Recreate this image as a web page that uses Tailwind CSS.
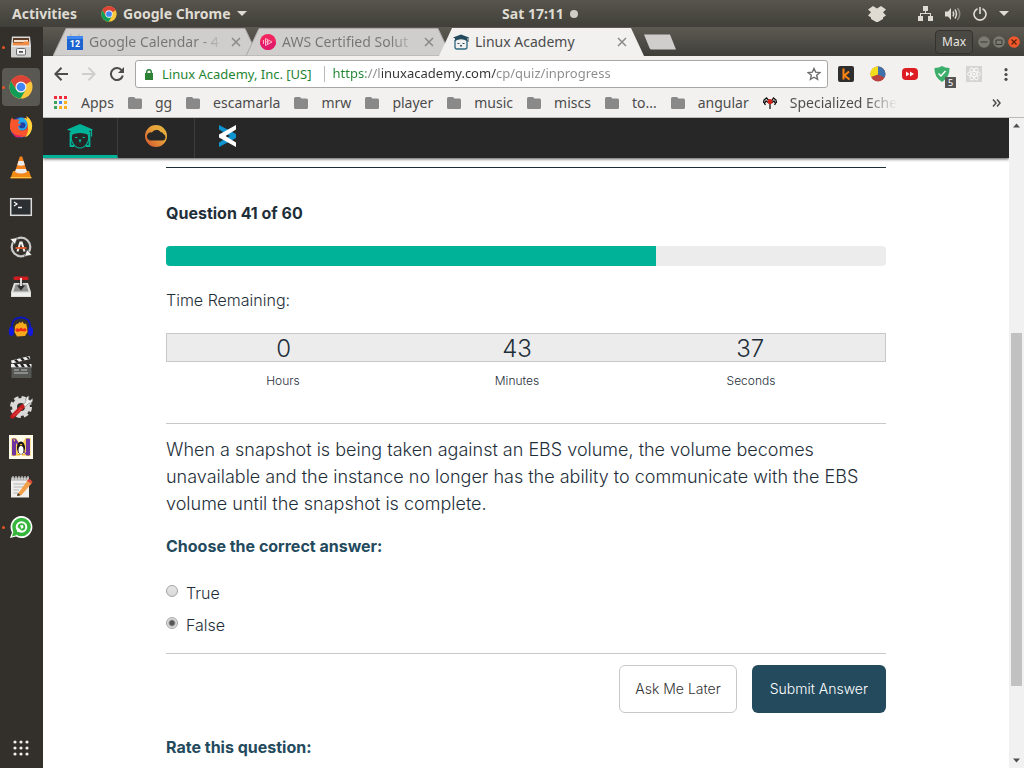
<!DOCTYPE html>
<html lang="en">
<head>
<meta charset="utf-8">
<meta name="viewport" content="width=device-width, initial-scale=1">
<title>Linux Academy</title>
<script src="https://cdn.jsdelivr.net/npm/@tailwindcss/browser@4"></script>
</head>
<body class="flex h-screen flex-col overflow-hidden bg-white font-['Noto_Sans',sans-serif] text-[#4c4c4c]">

<svg class="hidden" aria-hidden="true">
  <symbol id="chrome" viewBox="0 0 24 24">
    <circle cx="12" cy="12" r="11.5" fill="#fbc63b"/>
    <path d="M12 12 2 6.3A11.5 11.5 0 0 1 22 6.300Z" fill="#db4437"/>
    <path d="M12 6.500H22A11.500 11.500 0 0 0 2 6.300L7.200 14.700Z" fill="#db4437"/>
    <path d="M2 6.300A11.500 11.500 0 0 0 11.500 23.500L16.700 14.700 12 17.500 7.200 14.700Z" fill="#109d58"/>
    <circle cx="12" cy="12" r="5.500" fill="#f4f4f4"/>
    <circle cx="12" cy="12" r="4.300" fill="#4285f4"/>
  </symbol>
  <symbol id="folder" viewBox="0 0 14 12">
    <path d="M1.500 0H6L7.500 1.500H12.500A1.500 1.500 0 0 1 14 3V10.500A1.500 1.500 0 0 1 12.500 12H1.500A1.500 1.500 0 0 1 0 10.500V1.500A1.500 1.500 0 0 1 1.500 0Z" fill="#898989"/>
  </symbol>
  <symbol id="cross" viewBox="0 0 10 10">
    <path d="M1 1 9 9M9 1 1 9" stroke="#8b8987" stroke-width="1.500"/>
  </symbol>
</svg>

<!-- System bar -->
<header class="grid h-[27px] shrink-0 grid-cols-[1fr_auto_1fr] items-center bg-linear-to-b from-[#57554d] to-[#403f39] text-sm font-bold text-[#dfdbd2]">
  <div class="flex items-center gap-6 pl-3">
    <button type="button">Activities</button>
    <button type="button" class="flex items-center gap-1.5">
      <svg class="size-4"><use href="#chrome"/></svg>Google Chrome
      <svg class="h-[5px] w-2.5" viewBox="0 0 10 5"><path d="M0 0H10L5 5Z" fill="currentColor"/></svg>
    </button>
  </div>
  <button type="button" class="flex items-center gap-1.5 pl-14">Sat 17:11<span class="size-2 rounded-full bg-[#d0cdc5]"></span></button>
  <div class="flex items-center justify-end gap-3 pr-[15px]">
    <button type="button" aria-label="Dropbox" class="mr-5">
      <svg class="h-4 w-[18px]" viewBox="0 0 18 16" fill="#dfdbd2"><path d="M5 0 9 2.500 13 0 18 3.500 15 6.300 18 9.500 15 11.500V13L9 16.500 3 13V11.500L0 9.500 3 6.300 0 3.500Z"/></svg>
    </button>
    <button type="button" aria-label="Network">
      <svg class="h-[15px] w-[15px]" viewBox="0 0 15 15" fill="#dfdbd2"><path d="M5 0H10V5H8V7H13V10H15V15H10V10H12V8H3V10H5V15H0V10H2V7H7V5H5Z"/></svg>
    </button>
    <button type="button" aria-label="Volume">
      <svg class="h-3.5 w-4" viewBox="0 0 16 14" fill="none" stroke="#dfdbd2" stroke-width="1.500"><path d="M0 4.500H3L6 1V13L3 9.500H0Z" fill="#dfdbd2" stroke="none"/><path d="M8 4.500Q9.500 7 8 9.500M10 2.500Q13 7 10 11.500"/><path d="M12.500 1Q17 7 12.500 13" opacity=".45"/></svg>
    </button>
    <button type="button" aria-label="Power" class="flex items-center gap-3">
      <svg class="size-3.5" viewBox="0 0 14 14" fill="none" stroke="#dfdbd2" stroke-width="1.600"><path d="M4.500 1.700A6 6 0 1 0 9.500 1.700M7 0V7"/></svg>
      <svg class="h-[5px] w-2.5" viewBox="0 0 10 5"><path d="M0 0H10L5 5Z" fill="#dfdbd2"/></svg>
    </button>
  </div>
</header>

<div class="flex min-h-0 flex-1">

  <!-- Dock -->
  <nav aria-label="Dock" class="flex w-[43px] shrink-0 flex-col items-stretch bg-[#33302c] pr-px">
    <button type="button" aria-label="Files" class="relative flex h-10 shrink-0 items-center justify-center">
      <span class="absolute left-0.5 size-[3px] rounded-full bg-[#e95420]"></span>
      <svg class="size-6" viewBox="0 0 24 24"><path d="M3 1.500H21L22 11H2Z" fill="#d9d9d7"/><path d="M4 3H20V11H4Z" fill="#5e3a28"/><path d="M5 5H19V7H5Z" fill="#f4e3cf"/><path d="M4 7.500H14L15 6.500H20V11H4Z" fill="#ef8b42"/><rect x="2" y="10.500" width="20" height="12" rx="1" fill="#cfcfce"/><path d="M2.500 11.200H21.500" stroke="#f5f5f5"/><rect x="7.500" y="13.500" width="9" height="6.500" rx="1" fill="#f4f4f4" stroke="#696969"/><rect x="10" y="16" width="4" height="1.800" fill="#555"/></svg>
    </button>
    <button type="button" aria-label="Google Chrome" class="relative flex h-10 shrink-0 items-center justify-center">
      <span class="absolute inset-x-0.5 inset-y-px rounded bg-[#5a5853]"></span>
      <span class="absolute left-0.5 size-[3px] rounded-full bg-[#e95420]"></span>
      <svg class="relative size-6"><use href="#chrome"/></svg>
    </button>
    <button type="button" aria-label="Firefox" class="flex h-10 shrink-0 items-center justify-center">
      <svg class="size-6" viewBox="0 0 24 24"><circle cx="11.500" cy="12.500" r="10.500" fill="#243fa4"/><circle cx="12.500" cy="9" r="6.500" fill="#26a9e8"/><path d="M1 9Q1 5 3 2.500Q4 5 6 4.500Q9 3.500 10.500 5.500L8.500 8 12 9.500 9 11.500Q9.500 16 14 15.500Q19 14.500 18.500 9Q18 5 15 3Q17 3 18 4L17.500 1Q24 6 23 13A11.200 11 0 0 1 1 13.500Z" fill="#f9552c"/><path d="M17.500 1Q24 6 23 13Q22 20 16 22.500Q20 17 19 12Q19 6 15 3Q17 3 18 4Z" fill="#ffd53a"/><path d="M11 8Q15 6 16.500 9Q17 13 13 13.500Q10 13 10 11L12 9.700Z" fill="#243fa4"/><path d="M3 17Q8 22 14 20Q10 24 6 21.500Z" fill="#e91f63"/></svg>
    </button>
    <button type="button" aria-label="VLC" class="flex h-10 shrink-0 items-center justify-center">
      <svg class="size-6" viewBox="0 0 24 24"><path d="M4 16H20L22.500 23.500H1.500Z" fill="#f08c14"/><path d="M10.800 1.500H13.200L18.500 18.500Q12 22 5.500 18.500Z" fill="#f4821f"/><path d="M9.500 6H14.500L15.800 10Q12 11.500 8.300 10ZM7 14H17L18 17Q12 20 6 17Z" fill="#ececec"/><path d="M1.500 22.500H22.500" stroke="#ffc24b"/></svg>
    </button>
    <button type="button" aria-label="Terminal" class="flex h-10 shrink-0 items-center justify-center">
      <svg class="size-6" viewBox="0 0 24 24"><rect x="1.700" y="3.700" width="20.600" height="16.600" fill="#2c2f31" stroke="#dcdcdc" stroke-width="1.500"/><path d="M5 7 8 9 5 11M9 12.500H13" fill="none" stroke="#f4f4f4" stroke-width="1.300"/></svg>
    </button>
    <button type="button" aria-label="Software Updater" class="flex h-10 shrink-0 items-center justify-center">
      <svg class="size-6" viewBox="0 0 24 24" fill="none"><circle cx="12" cy="12" r="9.300" stroke="#c9c9c7" stroke-width="2.200"/><path d="M1 4 8.500 2.500 6 9.500ZM23 20 15.500 21.500 18 14.500Z" fill="#f1f1ef" stroke="#33302c" stroke-width=".6"/><path d="M8.500 16.500 11.300 7.500H12.700L15.500 16.500" stroke="#f1f1ef" stroke-width="2"/><path d="M6.500 13H17.500" stroke="#e5582b" stroke-width="1.800"/></svg>
    </button>
    <button type="button" aria-label="Package Installer" class="flex h-10 shrink-0 items-center justify-center">
      <svg class="size-6" viewBox="0 0 24 24"><path d="M5 8H19L22 17V22H2V17Z" fill="#dededc"/><path d="M6.500 9.500H17.500L19.500 16.500H4.500Z" fill="#8d8d8b"/><path d="M3 18H21V21H3Z" fill="#eeeeec"/><rect x="4.500" y="1.500" width="15" height="3.500" rx="1.500" fill="#cf1d20"/><path d="M10.500 5H13.500V10.500H16L12 15.500 8 10.500H10.500Z" fill="#2b2b2b"/><path d="M12 3V11" stroke="#eee" stroke-width="1.800"/></svg>
    </button>
    <button type="button" aria-label="Audacity" class="flex h-10 shrink-0 items-center justify-center">
      <svg class="size-6" viewBox="0 0 24 24"><path d="M6 11 8 8.500 9 9 10.500 7 12 8 13.500 6.500 15 9 17 8.500 18 12 18.500 17 16 21 8 21.500 5.500 17Z" fill="#f5a81c"/><path d="M6 15 8 13 10 14 12 12.500 14 14 16 13 18 15 16 16.500 12 16 8 17Z" fill="#ee2a18"/><path d="M3 14C2 5 7 2.500 12 2.500S22 5 21 14" fill="none" stroke="#0b16c4" stroke-width="1.800"/><rect x="0" y="12" width="4.800" height="9" rx="2.400" fill="#1119e0"/><rect x="19.200" y="12" width="4.800" height="9" rx="2.400" fill="#1119e0"/></svg>
    </button>
    <button type="button" aria-label="Video Editor" class="flex h-10 shrink-0 items-center justify-center">
      <svg class="size-6" viewBox="0 0 24 24"><rect x="2.500" y="12" width="20" height="11" fill="#555753"/><path d="M2 5.500 20.500 1 21.300 4 2.800 8.500Z" fill="#eee"/><path d="M2 9H22.500V12.300H2Z" fill="#eee"/><path d="M5 5 7.500 7.500 10 6.700 7.500 4.300ZM11 3.500 13.500 6 16 5.200 13.500 2.800ZM17 2 19.500 4.500 21 4 19 1.500ZM5 9 7 12.300H10L8 9ZM11 9 13 12.300H16L14 9ZM17 9 19 12.300H22L20 9Z" fill="#222"/><path d="M5 15H10M12 15H18M5 18H19" stroke="#ddd" stroke-width=".8"/></svg>
    </button>
    <button type="button" aria-label="Settings" class="flex h-10 shrink-0 items-center justify-center">
      <svg class="size-6" viewBox="0 0 24 24"><circle cx="12" cy="12" r="9.500" fill="none" stroke="#d9d9d7" stroke-width="3" stroke-dasharray="4.500 3"/><circle cx="12" cy="12" r="6.500" fill="none" stroke="#d9d9d7" stroke-width="5"/><path d="M13 11 17 6.500Q16 2 20 1L19.500 4.500 21 5.500 23.500 3.500Q24.500 8 19.500 8.500L15 13Z" fill="#efefed" stroke="#777" stroke-width=".6"/><path d="M3.500 21.500 13.500 11.500" stroke="#c61a1c" stroke-width="4.200" stroke-linecap="round"/><path d="M4.500 21 12.500 13" stroke="#ec5554" stroke-width="1"/></svg>
    </button>
    <button type="button" aria-label="Notes" class="flex h-10 shrink-0 items-center justify-center">
      <svg class="size-6" viewBox="0 0 24 24"><path d="M0 0H24V24H0Z" fill="#fffbea"/><path d="M2.500 3H7L12 10 16.500 3H21.500V21H17L12 14 7.500 21H2.500Z" fill="#f9cf55"/><path d="M3.500 4H6.500L17.500 20H20.500V4H17.500V20M3.500 4V20H6.500V4" fill="#6d35a0" stroke="#6d35a0"/><ellipse cx="12" cy="13" rx="4" ry="6.500" fill="#161616"/><ellipse cx="12" cy="15" rx="2.500" ry="4" fill="#fff"/><path d="M10.500 9H13.500L12 11ZM8 19H11V20.500H8ZM13 19H16V20.500H13Z" fill="#f5b62b"/></svg>
    </button>
    <button type="button" aria-label="Text Editor" class="flex h-10 shrink-0 items-center justify-center">
      <svg class="size-6" viewBox="0 0 24 24"><path d="M2 3H20V22.500H2Z" fill="#efefed"/><path d="M2 2.500H20V5.500H2Z" fill="#a5a5a3"/><path d="M4 1V5M7 1V5M10 1V5M13 1V5M16 1V5M19 1V5" stroke="#eee"/><path d="M4.500 9H17M4.500 12H15M4.500 15H10M4.500 18H9" stroke="#b5b5b3"/><path d="M9 18.500 18.500 5.500 22.500 8.500 12.500 20 8 21Z" fill="#f2a04a"/><path d="M18 6 19.500 4Q22 4 23.500 7L22.500 8.800Z" fill="#dd4a3a"/><path d="M8 21 9 18 11.500 20.200Z" fill="#3a3028"/></svg>
    </button>
    <button type="button" aria-label="WhatsApp" class="relative flex h-10 shrink-0 items-center justify-center">
      <span class="absolute left-0.5 size-[3px] rounded-full bg-[#e95420]"></span>
      <svg class="size-6" viewBox="0 0 24 24"><path d="M12.500 1A11 11 0 1 1 7 21.600L1 23 3 17.500A11 11 0 0 1 12.500 1Z" fill="#fff"/><circle cx="12.500" cy="12" r="9.300" fill="#35b53b"/><path d="M3 21.500 4.500 16 8 20Z" fill="#35b53b"/><circle cx="12.500" cy="12" r="4.800" fill="none" stroke="#fff" stroke-width="2"/><path d="M8 17 8.500 12 13 16Z" fill="#fff"/><path d="M11 10.500 14 10 14.500 12.500 12.500 14Z" fill="#fff"/></svg>
    </button>
    <button type="button" aria-label="Show Applications" class="mt-auto flex h-10 shrink-0 items-center justify-center">
      <svg class="size-4" viewBox="0 0 16 16" fill="#efefed"><circle cx="2" cy="2" r="1.600"/><circle cx="8" cy="2" r="1.600"/><circle cx="14" cy="2" r="1.600"/><circle cx="2" cy="8" r="1.600"/><circle cx="8" cy="8" r="1.600"/><circle cx="14" cy="8" r="1.600"/><circle cx="2" cy="14" r="1.600"/><circle cx="8" cy="14" r="1.600"/><circle cx="14" cy="14" r="1.600"/></svg>
    </button>
  </nav>

  <!-- Browser window -->
  <div class="flex min-w-0 flex-1 flex-col">

    <!-- Tab strip -->
    <div class="flex h-[29px] shrink-0 bg-linear-to-b from-[#5c5a52] to-[#403f3a] pt-px pl-2.5 text-sm">
      <div role="tablist" class="flex">
        <div class="relative flex w-[205px] items-center gap-1.5 pr-4 pl-3.5 text-[#777573]">
          <svg class="absolute inset-0 size-full" viewBox="0 0 205 28" preserveAspectRatio="none"><path d="M0 28 13 .5H192L205 28Z" fill="#cfcecc" stroke="#a9a8a5"/></svg>
          <svg class="relative size-4 shrink-0" viewBox="0 0 16 16"><path d="M0 2H16V16H0Z" fill="#1b63d0"/><path d="M0 2H16V5H0Z" fill="#3f86ee"/><path d="M3 0H5V2H3ZM11 0H13V2H11Z" fill="#bbb"/><text x="8" y="13" text-anchor="middle" font-family="Roboto,sans-serif" font-size="9" font-weight="700" fill="#fff">12</text></svg>
          <button type="button" role="tab" aria-selected="false" class="relative min-w-0 flex-1 bg-linear-to-r from-[#777573] from-80% to-transparent bg-clip-text text-left whitespace-nowrap text-transparent">Google Calendar - 4</button>
          <button type="button" aria-label="Close Google Calendar" class="relative flex size-3 items-center justify-center"><svg class="size-2.5"><use href="#cross"/></svg></button>
        </div>
        <div class="relative -ml-3 flex w-[205px] items-center gap-1.5 pr-4 pl-3.5 text-[#777573]">
          <svg class="absolute inset-0 size-full" viewBox="0 0 205 28" preserveAspectRatio="none"><path d="M0 28 13 .5H192L205 28Z" fill="#cfcecc" stroke="#a9a8a5"/></svg>
          <svg class="relative size-4 shrink-0" viewBox="0 0 16 16"><circle cx="8" cy="8" r="8" fill="#f2245f"/><path d="M0 8A8 8 0 0 0 16 8Z" fill="#e11a6a"/><path d="M5.500 4.500 12 8 5.500 11.500ZM3.500 6V10M5.500 8H9M7.500 5.500V10.500" fill="none" stroke="#f9b4cb"/></svg>
          <button type="button" role="tab" aria-selected="false" class="relative min-w-0 flex-1 bg-linear-to-r from-[#777573] from-80% to-transparent bg-clip-text text-left whitespace-nowrap text-transparent">AWS Certified Solut</button>
          <button type="button" aria-label="Close AWS Certified Solutions" class="relative flex size-3 items-center justify-center"><svg class="size-2.5"><use href="#cross"/></svg></button>
        </div>
        <div class="relative -ml-3 flex w-[205px] items-center gap-1.5 pr-4 pl-3.5">
          <svg class="absolute inset-0 size-full" viewBox="0 0 205 28" preserveAspectRatio="none"><path d="M0 28 13 0H192L205 28Z" fill="#f2f1f0"/></svg>
          <svg class="relative size-4 shrink-0" viewBox="0 0 16 16"><path d="M2 6V13Q2 15 4 15H12Q14 15 14 13V6" fill="#f2f1f0" stroke="#2e6a80" stroke-width="1.300"/><path d="M8 .5 16 3.500 14 4.600V7Q8 3.500 2 7V4.600L0 3.500Z" fill="#234a5d"/><path d="M15 3.500V8" stroke="#234a5d"/><path d="M4.500 9.500H6.500M9.500 9.500H11.500M7.300 11 8 12.500 8.700 11" stroke="#234a5d" fill="none"/></svg>
          <button type="button" role="tab" aria-selected="true" class="relative min-w-0 flex-1 text-left whitespace-nowrap">Linux Academy</button>
          <button type="button" aria-label="Close Linux Academy" class="relative flex size-3 items-center justify-center"><svg class="size-2.5"><use href="#cross"/></svg></button>
        </div>
      </div>
      <button type="button" aria-label="New tab" class="self-center"><svg class="h-4 w-8" viewBox="0 0 32 16"><path d="M0 .5H26L32 15.500H8Q6 15.500 5.500 14Z" fill="#cfcecc"/></svg></button>
      <div class="ml-auto flex items-center gap-[3px] pr-1">
        <button type="button" class="mr-0.5 h-6 rounded border border-[#33322e] bg-[#4a4842] px-1.5 text-xs text-[#e8e6e1]">Max</button>
        <button type="button" aria-label="Minimize" class="size-3"><svg viewBox="0 0 12 12"><circle cx="6" cy="6" r="5.800" fill="#7b7a73"/><path d="M2.500 6H9.500" stroke="#3b3a35"/></svg></button>
        <button type="button" aria-label="Maximize" class="size-3"><svg viewBox="0 0 12 12"><circle cx="6" cy="6" r="5.800" fill="#7b7a73"/><path d="M3 4H9V8.500H3Z" fill="none" stroke="#3b3a35"/></svg></button>
        <button type="button" aria-label="Close" class="size-3"><svg viewBox="0 0 12 12"><circle cx="6" cy="6" r="5.800" fill="#ee5a2c"/><path d="M3.500 3.500 8.500 8.500M8.500 3.500 3.500 8.500" stroke="#5c1f0c" stroke-width="1.200"/></svg></button>
      </div>
    </div>

    <!-- Toolbar -->
    <div class="flex h-9 shrink-0 items-center bg-[#f2f1f0] pr-[11px] pl-[11px]">
      <div class="flex w-[81px] shrink-0 items-center gap-3.5">
        <button type="button" aria-label="Back"><svg class="size-3.5" viewBox="0 0 14 14" fill="none" stroke="#4c4c4c" stroke-width="2"><path d="M14 7H1.500M7.500 .8 1.300 7 7.500 13.200"/></svg></button>
        <button type="button" aria-label="Forward"><svg class="size-3.5" viewBox="0 0 14 14" fill="none" stroke="#cfcecc" stroke-width="2"><path d="M0 7H12.500M6.500 .8 12.700 7 6.500 13.200"/></svg></button>
        <button type="button" aria-label="Reload"><svg class="size-3.5" viewBox="0 0 14 14" fill="none" stroke="#4c4c4c" stroke-width="2"><path d="M11.800 3.500A6 6 0 1 0 12.800 8.500"/><path d="M14 0V6H8Z" fill="#4c4c4c" stroke="none"/></svg></button>
      </div>
      <div class="flex h-7 min-w-0 flex-1 items-center rounded-[3px] border border-[#a8a7a5] bg-white pr-1.5 pl-[9px] text-[13px]">
        <svg class="h-[11px] w-2 shrink-0" viewBox="0 0 8 11"><path d="M0 4H8V11H0Z" fill="#2e8236"/><path d="M1.700 4.500V3A2.300 2.300 0 0 1 6.300 3V4.500" fill="none" stroke="#2e8236" stroke-width="1.400"/></svg>
        <button type="button" class="ml-[9px] shrink-0 border-r border-[#b9b9b9] pr-3 leading-4 text-[#1f8533]">Linux Academy, Inc. [US]</button>
        <input type="text" aria-label="Address" value="https://linuxacademy.com/cp/quiz/inprogress" class="ml-2 min-w-0 flex-1 bg-[linear-gradient(to_right,#1f8533_33px,#8b8b8b_33px,#8b8b8b_49px,#333_49px,#333_163px,#8b8b8b_163px)] bg-clip-text text-transparent outline-none">
        <button type="button" aria-label="Bookmark this page"><svg class="size-3.5" viewBox="0 0 14 14" fill="none" stroke="#6b6b6b" stroke-width="1.400"><path d="M7 1.500 8.700 5.200 12.800 5.600 9.700 8.300 10.600 12.300 7 10.200 3.400 12.300 4.300 8.300 1.200 5.600 5.300 5.200Z"/></svg></button>
      </div>
      <div class="ml-2.5 flex shrink-0 items-center gap-4">
        <button type="button" aria-label="Extension k"><svg class="size-4" viewBox="0 0 16 16"><rect width="16" height="16" rx="2" fill="#2e2e2e"/><path d="M5.500 2.500V13.500M11 5.500 6.500 9.500 11.500 13.500" fill="none" stroke="#ff8410" stroke-width="2"/></svg></button>
        <button type="button" aria-label="Extension pie"><svg class="size-4" viewBox="0 0 16 16"><circle cx="8" cy="8" r="7.500" fill="#b9423f"/><path d="M8 8.500V.5A7.500 7.500 0 0 1 14.500 11.500Z" fill="#3d72ad"/><path d="M8 8.500V.5A7.500 7.500 0 0 0 1 11Z" fill="#f3dc1b"/></svg></button>
        <button type="button" aria-label="Fast forward extension"><svg class="size-4" viewBox="0 0 16 16"><rect y="2" width="16" height="12" rx="4" fill="#dd1b22"/><path d="M4 5.500 7.500 8 4 10.500ZM8 5.500 12 8 8 10.500Z" fill="#fff"/></svg></button>
        <button type="button" aria-label="Shield extension" class="relative"><svg class="size-4" viewBox="0 0 16 16"><path d="M8 0Q11 2 15.500 2Q16 11 8 16Q0 11 .5 2Q5 2 8 0Z" fill="#3cae6b"/><path d="M4.500 7.500 7 10 11.500 5" fill="none" stroke="#fff" stroke-width="1.500"/></svg><span class="absolute top-[11px] left-[11px] flex h-[11px] w-[11px] items-center justify-center bg-[#555] text-[9px] text-white">5</span></button>
        <button type="button" aria-label="React extension"><svg class="size-4" viewBox="0 0 16 16"><path d="M0 0H16V16H0Z" fill="#d5d4d2"/><g fill="none" stroke="#f7f7f6"><ellipse cx="8" cy="8" rx="6.500" ry="2.600"/><ellipse cx="8" cy="8" rx="6.500" ry="2.600" transform="rotate(60 8 8)"/><ellipse cx="8" cy="8" rx="6.500" ry="2.600" transform="rotate(120 8 8)"/></g><circle cx="8" cy="8" r="1.300" fill="#f7f7f6"/></svg></button>
        <button type="button" aria-label="Menu" class="flex w-[15px] justify-end"><svg class="h-[13px] w-[13px] shrink-0" viewBox="0 0 13 13" fill="#4c4c4c"><circle cx="6" cy="1.700" r="1.600"/><circle cx="6" cy="6.500" r="1.600"/><circle cx="6" cy="11.300" r="1.600"/></svg></button>
      </div>
    </div>

    <!-- Bookmarks -->
    <nav aria-label="Bookmarks" class="flex h-[26px] shrink-0 items-center gap-3.5 border-b border-[#bbbab8] bg-[#f2f1f0] pr-4 pb-1 pl-[11px] text-sm">
      <a href="#" class="flex items-center gap-[13px]"><svg class="size-3.5" viewBox="0 0 14 14"><path d="M0 0H3V3H0ZM5 0H8V3H5ZM10 0H13V3H10Z" fill="#f0293b"/><path d="M0 5H3V8H0Z" fill="#3ba35b"/><path d="M5 5H8V8H5Z" fill="#4285f4"/><path d="M10 5H13V8H10ZM5 10H8V13H5ZM10 10H13V13H10Z" fill="#fbb11f"/><path d="M0 10H3V13H0Z" fill="#3ba35b"/></svg>Apps</a>
      <a href="#" class="flex items-center gap-[13px]"><svg class="h-3 w-3.5"><use href="#folder"/></svg>gg</a>
      <a href="#" class="flex items-center gap-[13px]"><svg class="h-3 w-3.5"><use href="#folder"/></svg>escamarla</a>
      <a href="#" class="flex items-center gap-[13px]"><svg class="h-3 w-3.5"><use href="#folder"/></svg>mrw</a>
      <a href="#" class="flex items-center gap-[13px]"><svg class="h-3 w-3.5"><use href="#folder"/></svg>player</a>
      <a href="#" class="flex items-center gap-[13px]"><svg class="h-3 w-3.5"><use href="#folder"/></svg>music</a>
      <a href="#" class="flex items-center gap-[13px]"><svg class="h-3 w-3.5"><use href="#folder"/></svg>miscs</a>
      <a href="#" class="flex items-center gap-[13px]"><svg class="h-3 w-3.5"><use href="#folder"/></svg>to...</a>
      <a href="#" class="flex items-center gap-[13px]"><svg class="h-3 w-3.5"><use href="#folder"/></svg>angular</a>
      <a href="#" class="flex items-center gap-[13px]"><svg class="h-3 w-3.5 shrink-0" viewBox="0 0 14 12" fill="none" stroke="#111" stroke-width="1.300"><path d="M7 5 3.500 1 1 3 .5 6M6 6 3 4 1.500 6.500 2.500 8M8 5 10.500 1 13 3 13.500 6M8.500 6 11 4 12.500 6.500 11.500 8M7 6V12"/><circle cx="7" cy="4.500" r="2.500" fill="#d3211c" stroke="none"/></svg><span class="bg-linear-to-r from-[#4c4c4c] from-70% to-transparent bg-clip-text whitespace-nowrap text-transparent">Specialized Eche</span></a>
      <button type="button" aria-label="More bookmarks" class="ml-auto pr-1.5"><svg class="h-2 w-2.5" viewBox="0 0 10 8" fill="none" stroke="#4c4c4c" stroke-width="1.500"><path d="M1 .5 4 4 1 7.500M5 .5 8 4 5 7.500"/></svg></button>
    </nav>

    <div class="flex min-h-0 flex-1">
      <div class="flex min-w-0 flex-1 flex-col overflow-hidden font-[Inter,sans-serif] text-[#1f2f3a]">

        <!-- Site navigation -->
        <nav aria-label="Linux Academy" class="z-10 flex h-10 shrink-0 bg-[#272727] shadow-[0_1px_3px_rgba(0,0,0,0.7)]">
          <a href="#" aria-label="Academy" class="flex w-[75px] items-center justify-center border-r border-b-3 border-r-[#3d3d3d] border-b-[#00b398]">
            <svg class="h-[25px] w-[26px]" viewBox="0 0 26 25"><path d="M3.500 8V22H7" fill="none" stroke="#00b398" stroke-width="1.800"/><path d="M22.500 8V22H19" fill="none" stroke="#00b398" stroke-width="1.800"/><path d="M5 10Q13 6 21 10Q23 15 20 19.500Q17.500 24 13 24T6 19.500Q3 15 5 10Z" fill="none" stroke="#00b398" stroke-width="1.200"/><path d="M13 0 26 5.500 22 7.500V10.500Q13 7.500 4 10.500V7.500L0 5.500Z" fill="#00b398"/><path d="M24.500 6V12.500" stroke="#00b398" stroke-width="1.200"/><path d="M8 13.500H10.500M15.500 13.500H18" stroke="#00b398"/><path d="M11.500 15.500H14.500L13 19Z" fill="#00b398"/></svg>
          </a>
          <a href="#" aria-label="Cloud" class="flex w-[77px] items-center justify-center border-r border-[#3d3d3d] pb-1">
            <svg class="h-[22px] w-[22px]" viewBox="0 0 22 22"><defs><linearGradient id="ring" x1="0" y1="1" x2="1" y2="0"><stop offset="0" stop-color="#d3502d"/><stop offset=".6" stop-color="#e8a33a"/><stop offset="1" stop-color="#e5b83e"/></linearGradient></defs><path fill-rule="evenodd" d="M11 0A11 11 0 1 1 11 22A11 11 0 0 1 11 0ZM5 15.500H17.500A3.400 3.400 0 0 0 18.500 9Q17.500 7 15.500 7A5 5 0 0 0 7 7.500A4 4 0 0 0 5 15.500Z" fill="url(#ring)"/></svg>
          </a>
          <a href="#" aria-label="Stack" class="flex w-16 items-center justify-center pb-1">
            <svg class="h-[22px] w-[17px]" viewBox="0 0 17 22"><path d="M0 0 17 9V13L0 22V17.500L11 11 0 4.500Z" fill="#0f94d2"/><path d="M17 0V4.500L6.500 11 17 17.500V22L0 12.500V9.500Z" fill="#fff"/></svg>
          </a>
        </nav>

        <!-- Quiz -->
        <main class="mx-auto mt-[9px] w-full max-w-[720px] border-t border-[#1f2f3a]">
          <h1 class="mt-[33px] text-base leading-6 font-bold">Question 41 of 60</h1>
          <div role="progressbar" aria-label="Quiz progress" aria-valuemin="0" aria-valuemax="60" aria-valuenow="41" class="mt-[21px] h-5 overflow-hidden rounded bg-[#ececec]">
            <div class="h-full bg-[#00b398]" style="width:68%"></div>
          </div>
          <p class="mt-[22px] text-base leading-6 font-light">Time Remaining:</p>
          <div class="mt-[21px] grid h-[29px] grid-cols-3 items-center border border-[#c8c8c8] bg-[#ececec] pt-[3px] pr-[18px] text-center text-2xl leading-none font-light">
            <span>0</span><span>43</span><span>37</span>
          </div>
          <div class="mt-[9px] grid grid-cols-3 pr-[18px] text-center text-xs leading-5 font-light">
            <span>Hours</span><span>Minutes</span><span>Seconds</span>
          </div>
          <hr class="mt-8 border-[#c8c8c8]">
          <form>
            <p class="mt-3 text-lg leading-[27px] font-light">When a snapshot is being taken against an EBS volume, the volume becomes unavailable and the instance no longer has the ability to communicate with the EBS volume until the snapshot is complete.</p>
            <fieldset class="mt-[17px]">
              <legend class="text-base leading-6 font-bold text-[#234a5d]">Choose the correct answer:</legend>
              <div class="mt-[19px] flex flex-col text-base leading-8 font-light">
                <label class="flex items-center gap-2"><input type="radio" name="answer" class="mb-1 size-3 appearance-none rounded-full border border-[#a5a5a5] bg-linear-to-b from-[#e6e6e6] to-[#d8d8d8]">True</label>
                <label class="flex items-center gap-2"><input type="radio" name="answer" checked class="mb-1 size-3 appearance-none rounded-full border border-[#a5a5a5] bg-[radial-gradient(circle,#555_2px,#dedede_4px)]">False</label>
              </div>
            </fieldset>
            <div class="mt-3 flex justify-end gap-[15px] border-t border-[#c8c8c8] pt-[11px] text-sm font-light">
              <button type="button" class="h-12 rounded-md border border-[#c8c8c8] bg-white px-[15px] text-[#333]">Ask Me Later</button>
              <button type="submit" class="h-12 rounded-md bg-[#234a5d] px-[18px] text-white">Submit Answer</button>
            </div>
          </form>
          <h2 class="mt-[22px] text-base leading-6 font-bold text-[#234a5d]">Rate this question:</h2>
        </main>
      </div>

      <!-- Page scrollbar -->
      <div aria-hidden="true" class="flex w-[15px] shrink-0 flex-col items-center bg-[#f1f1f1] py-[5px]">
        <svg class="h-[5px] w-[7px] shrink-0" viewBox="0 0 7 4"><path d="M0 4 3.500 0 7 4Z" fill="#505050"/></svg>
        <span class="grow-[205]"></span>
        <span class="w-[11px] grow-[352] bg-[#c1c1c1]"></span>
        <span class="grow-[72]"></span>
        <svg class="h-[5px] w-[7px] shrink-0" viewBox="0 0 7 4"><path d="M0 0H7L3.500 4Z" fill="#505050"/></svg>
      </div>
    </div>
  </div>
</div>
</body>
</html>
